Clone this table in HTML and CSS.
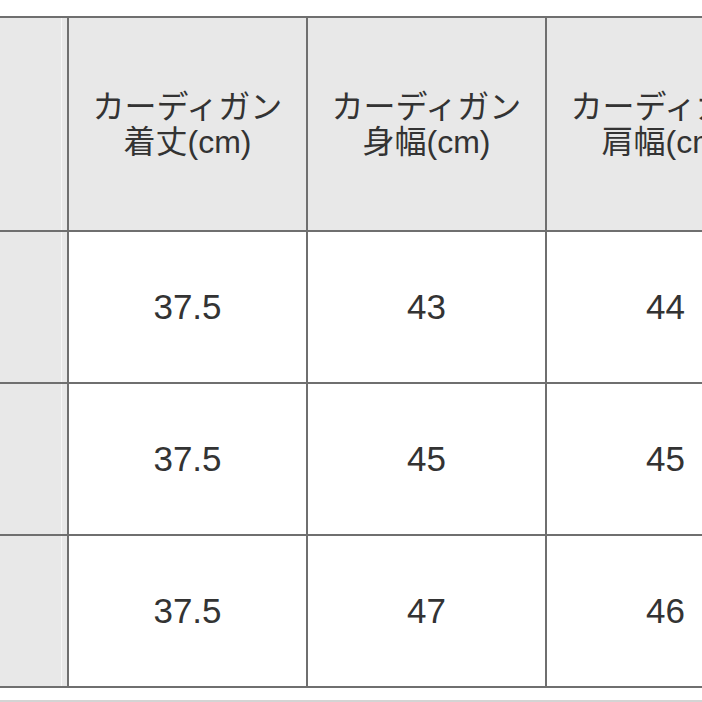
FILE: index.html
```html
<!DOCTYPE html>
<html lang="ja">
<head>
<meta charset="utf-8">
<link rel="stylesheet" href="styles.css">
</head>
<body>
<div class="page">
  <table class="size-table">
    <thead>
      <tr>
        <th class="side"></th>
        <th>カーディガン<br>着丈(cm)</th>
        <th>カーディガン<br>身幅(cm)</th>
        <th>カーディガン<br>肩幅(cm)</th>
      </tr>
    </thead>
    <tbody>
      <tr><td class="side"></td><td>37.5</td><td>43</td><td>44</td></tr>
      <tr><td class="side"></td><td>37.5</td><td>45</td><td>45</td></tr>
      <tr><td class="side"></td><td>37.5</td><td>47</td><td>46</td></tr>
    </tbody>
  </table>
  <div class="rule"></div>
</div>
</body>
</html>
```
FILE: styles.css
```css
html, body {
  margin: 0;
  padding: 0;
  background: #ffffff;
}
.page {
  width: 702px;
  height: 702px;
  overflow: hidden;
  padding-top: 16px;
  box-sizing: border-box;
  font-family: "Liberation Sans", "Noto Sans CJK JP", sans-serif;
  color: #333333;
}
.size-table {
  border-collapse: separate;
  border-spacing: 0;
  border-top: 2px solid #6f6f6f;
  table-layout: fixed;
  width: 785px;
}
.size-table th,
.size-table td {
  border-right: 2px solid #6f6f6f;
  border-bottom: 2px solid #6f6f6f;
  padding: 0;
  text-align: center;
  vertical-align: middle;
  width: 237px;
}
.size-table th {
  height: 210px;
  background: #e8e8e8;
  font-weight: normal;
  font-size: 32px;
  line-height: 35px;
  padding-top: 2px;
}
.size-table td {
  height: 150px;
  background: #ffffff;
  font-size: 35px;
}
.size-table .side {
  width: 67px;
  background: #e8e8e8;
  box-shadow: inset -5px 0 0 #e8e8e8, inset -6px 0 0 #f6f6f6;
}
.rule {
  margin-top: 12px;
  height: 2px;
  background: #d4d4d4;
}
```
